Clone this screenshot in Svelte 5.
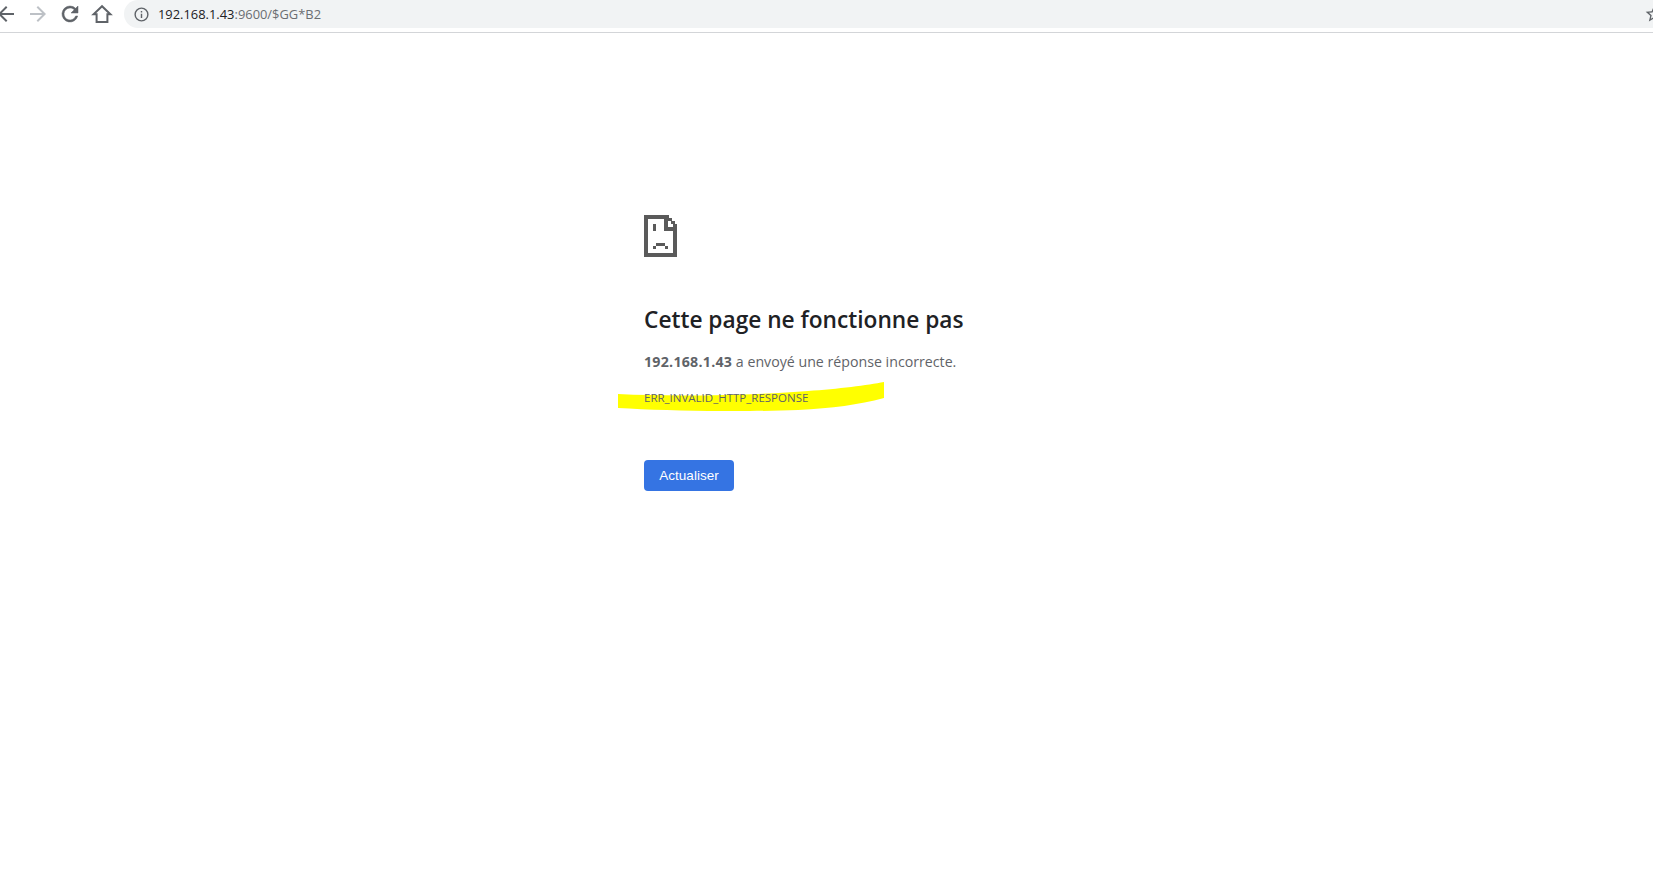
<script lang="ts">
    const host: string = "192.168.1.43";
</script>

<div class="toolbar">
    <svg class="nav first" viewBox="0 0 24 24"><path d="M20 11H7.83l5.59-5.59L12 4l-8 8 8 8 1.41-1.41L7.83 13H20z" /></svg>
    <svg class="nav off" viewBox="0 0 24 24"><path d="M12 4l-1.41 1.41L16.17 11H4v2h12.17l-5.58 5.59L12 20l8-8z" /></svg>
    <svg class="nav reload" viewBox="0 0 24 24"><path d="M17.65 6.35A7.96 7.96 0 0 0 12 4a8 8 0 1 0 7.73 10h-2.08A6 6 0 1 1 12 6c1.66 0 3.14.69 4.22 1.78L13 11h7V4z" /></svg>
    <svg class="nav home" viewBox="0 0 24 24"><path d="M12 4.2L3.6 12.3H6.6V20H17.4V12.3H20.4Z" /></svg>
    <div class="omnibox">
        <svg class="info" viewBox="0 0 24 24"><path d="M11 7h2v2h-2zm0 4h2v6h-2zm1-9a10 10 0 1 0 0 20 10 10 0 0 0 0-20zm0 18a8 8 0 1 1 0-16 8 8 0 0 1 0 16z" /></svg>
        <span class="url"><span class="host">{host}</span>:9600/$GG*B2</span>
        <svg class="star" viewBox="0 0 24 24"><path d="M22 9.24l-7.19-.62L12 2 9.19 8.63 2 9.24l5.46 4.73L5.82 21 12 17.27 18.18 21l-1.63-7.03zM12 15.4l-3.76 2.27 1-4.28-3.32-2.88 4.38-.38L12 6.1l1.71 4.04 4.38.38-3.32 2.88 1 4.28z" /></svg>
    </div>
</div>

<main>
    <svg class="sad" viewBox="0 0 33 42" shape-rendering="crispEdges">
        <path d="M0 0h22v4H4v34h25V16h4v26H0z" />
        <path d="M22 0h3v3h3v3h3v3h2v7H20V4h2zM24 12h5V9h-2V6h-3z" fill-rule="evenodd" />
        <path d="M9 9h3v7H9zM9 31h3v-3h9v3h3v3h-3v-3H12v3H9z" />
    </svg>
    <h1>Cette page ne fonctionne pas</h1>
    <p class="summary"><strong>{host}</strong> a envoyé une réponse incorrecte.</p>
    <div class="code">
        <svg class="marker" viewBox="0 0 266 29"><path d="M0 12C60 15 140 13 190 9 220 7 250 3 266 0V16C240 23 215 26 180 28 130 30 50 29 0 26z" /></svg>
        <span>ERR_INVALID_HTTP_RESPONSE</span>
    </div>
    <button>Actualiser</button>
</main>

<style>
    :global(body) {
        background: #fff;
        overflow: hidden;
    }
    .toolbar {
        display: flex;
        align-items: flex-start;
        gap: 8px;
        height: 32px;
        border-bottom: 1px solid #d3d5d8;
        overflow: hidden;
    }
    .nav {
        width: 24px;
        height: 24px;
        margin-top: 2px;
        flex: none;
        fill: #5f6368;
    }
    .first {
        margin-left: -6px;
    }
    .off {
        fill: #bdc1c6;
    }
    .reload {
        stroke: #5f6368;
        stroke-width: 0.5;
    }
    .home {
        fill: none;
        stroke: #5f6368;
        stroke-width: 2;
    }
    .omnibox {
        flex: 1;
        display: flex;
        align-items: center;
        height: 28px;
        margin-left: 2px;
        padding-left: 9px;
        background: #f1f3f4;
        border-radius: 14px 0 0 14px;
    }
    .info {
        width: 17px;
        height: 17px;
        fill: #5f6368;
        flex: none;
    }
    .url {
        margin-left: 8px;
        font: 12.9px "Open Sans", sans-serif;
        color: #6a6e72;
    }
    .host {
        color: #202124;
    }
    .star {
        width: 20px;
        height: 20px;
        margin-left: auto;
        margin-right: -11px;
        fill: #5f6368;
        flex: none;
    }
    main {
        padding: 182px 0 0 644px;
        font-family: "Open Sans", sans-serif;
    }
    .sad {
        display: block;
        width: 33px;
        height: 42px;
        fill: #5a5a5a;
    }
    h1 {
        margin: 47px 0 0;
        font-size: 22.7px;
        line-height: 32px;
        font-weight: 600;
        color: #202124;
    }
    .summary {
        margin: 14px 0 0;
        font-size: 14.2px;
        line-height: 24px;
        color: #5f6368;
    }
    strong {
        font-weight: 700;
        letter-spacing: 0.25px;
    }
    .code {
        position: relative;
        margin-top: 17px;
        font-size: 11.5px;
        line-height: 14px;
        color: #5f6368;
    }
    .code span {
        position: relative;
    }
    .marker {
        position: absolute;
        left: -26px;
        top: -9px;
        width: 266px;
        height: 29px;
        fill: #ffff00;
    }
    button {
        display: block;
        margin-top: 55px;
        width: 90px;
        height: 31px;
        padding: 0;
        border: none;
        border-radius: 4px;
        background: #3574e3;
        color: #fff;
        font: 13.5px "Liberation Sans", sans-serif;
    }
</style>
